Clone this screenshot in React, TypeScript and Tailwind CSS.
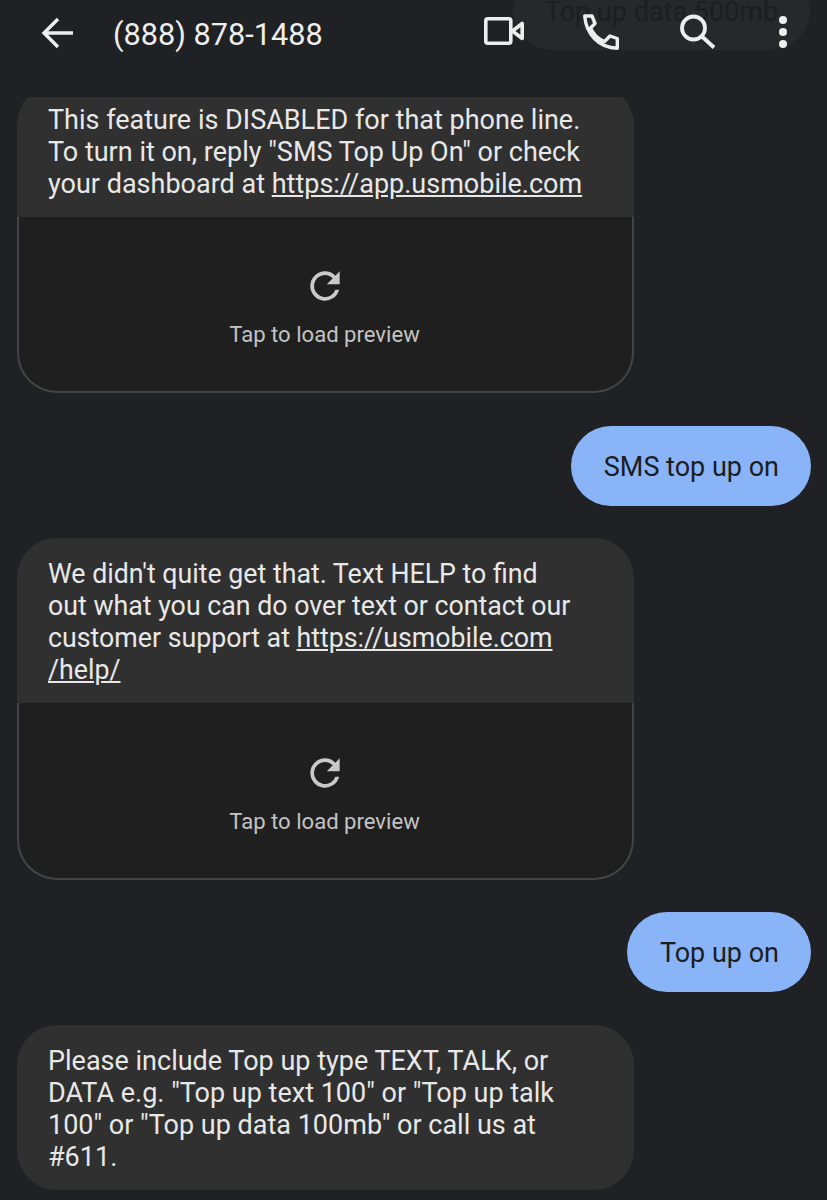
const Preview = ({ height, top }: { height: string; top: string }) => (
  <div className={`flex flex-col items-center rounded-b-[40px] border-2 border-t-0 border-[#434446] bg-[#1f1f1f] pr-[2px] ${height}`}>
    <svg viewBox="0 0 24 24" className={`h-[44px] w-[44px] fill-[#c9c9c9] ${top}`}>
      <path d="M17.65 6.35A7.96 7.96 0 0 0 12 4a8 8 0 1 0 7.73 10h-2.08A6 6 0 1 1 12 6c1.66 0 3.14.69 4.22 1.78L13 11h7V4l-2.35 2.35z" />
    </svg>
    <span className="mt-[13px] text-[22.1px] leading-[26px] text-[#c4c4c4]">Tap to load preview</span>
  </div>
);

const Sent = ({ text }: { text: string }) => (
  <div className="flex justify-end pr-[16px]">
    <div className="flex h-[80px] items-center rounded-[40px] bg-[#8ab4f8] pl-[33px] pr-[32px] pt-[2px] text-[27px] text-[#1c1d20]">
      {text}
    </div>
  </div>
);

export default function App() {
  return (
    <div className="relative h-[1200px] w-[827px] overflow-hidden bg-[#202124] font-['Roboto',sans-serif]">
      {/* previous message scrolling away behind the toolbar */}
      <div className="absolute right-[17px] top-[-30px] flex h-[80px] w-[297px] items-center justify-center rounded-[40px] bg-[#26282c] pt-[4px] text-[27px] text-[#1d1e21]">
        Top up data 500mb
      </div>

      <header className="relative flex h-[97px] items-start text-[#eeeeee]">
        <svg viewBox="0 0 33 32" className="ml-[41px] mt-[17px] h-[32px] w-[33px] fill-none stroke-[#eeeeee] stroke-[3.4]">
          <path d="M32 16H3M17 2L3 16l14 14" />
        </svg>
        <span className="ml-[39px] mt-[17px] text-[30.7px] leading-[36px]">(888) 878-1488</span>
        <div className="ml-auto mr-[40px] mt-[14px] flex items-start">
          <svg viewBox="0 0 40 28" className="mt-[3px] h-[28px] w-[40px] fill-none stroke-[#eeeeee] stroke-[3.6]">
            <rect x="1.8" y="1.8" width="25" height="24.4" rx="2" />
            <path d="M28.5 14L38.2 6.5v15z" strokeLinejoin="round" />
          </svg>
          <svg viewBox="0 0 36 36" className="ml-[59px] h-[36px] w-[36px] fill-none stroke-[#eeeeee] stroke-[3.4]">
            <path d="M1.7 2H9l3 7.5L7.5 14C10 20 15 25 21.5 27.5L27 22l7.3 2.5v9.8C16 34 3 20 1.7 2z" strokeLinejoin="round" />
          </svg>
          <svg viewBox="0 0 36 36" className="ml-[61px] h-[36px] w-[36px] fill-none stroke-[#eeeeee] stroke-[3.8]">
            <circle cx="13.5" cy="14" r="11.5" />
            <path d="M22 22.5L34 33.5" />
          </svg>
          <svg viewBox="0 0 8 32" className="ml-[63px] mt-[2px] h-[32px] w-[8px] fill-[#eeeeee]">
            <circle cx="4" cy="4" r="4" />
            <circle cx="4" cy="16" r="4" />
            <circle cx="4" cy="28" r="4" />
          </svg>
        </div>
      </header>

      <main className="relative flex h-[1103px] flex-col overflow-hidden text-[27px] leading-[32px] text-[#e8e8e8]">
        <div className="ml-[17px] -mt-[12px] w-[617px]">
          <div className="h-[132px] rounded-t-[40px] bg-[#303030] px-[31px] pt-[19px]">
            This feature is DISABLED for that phone line.
            <br />
            To turn it on, reply "SMS Top Up On" or check
            <br />
            your dashboard at <span className="underline">https://app.usmobile.com</span>
          </div>
          <Preview height="h-[176px]" top="mt-[47px]" />
        </div>

        <div className="mt-[33px]">
          <Sent text="SMS top up on" />
        </div>

        <div className="ml-[17px] mt-[32px] w-[617px]">
          <div className="h-[165px] rounded-t-[40px] bg-[#303030] px-[31px] pt-[20px] text-[26.75px]">
            We didn't quite get that. Text HELP to find
            <br />
            out what you can do over text or contact our
            <br />
            customer support at <span className="underline">https://usmobile.com</span>
            <br />
            <span className="underline">/help/</span>
          </div>
          <Preview height="h-[177px]" top="mt-[48px]" />
        </div>

        <div className="mt-[32px]">
          <Sent text="Top up on" />
        </div>

        <div className="ml-[17px] mt-[33px] h-[165px] w-[617px] rounded-[40px] bg-[#303030] px-[31px] pt-[20px]">
          Please include Top up type TEXT, TALK, or
          <br />
          DATA e.g. "Top up text 100" or "Top up talk
          <br />
          100" or "Top up data 100mb" or call us at
          <br />
          #611.
        </div>
      </main>
    </div>
  );
}
